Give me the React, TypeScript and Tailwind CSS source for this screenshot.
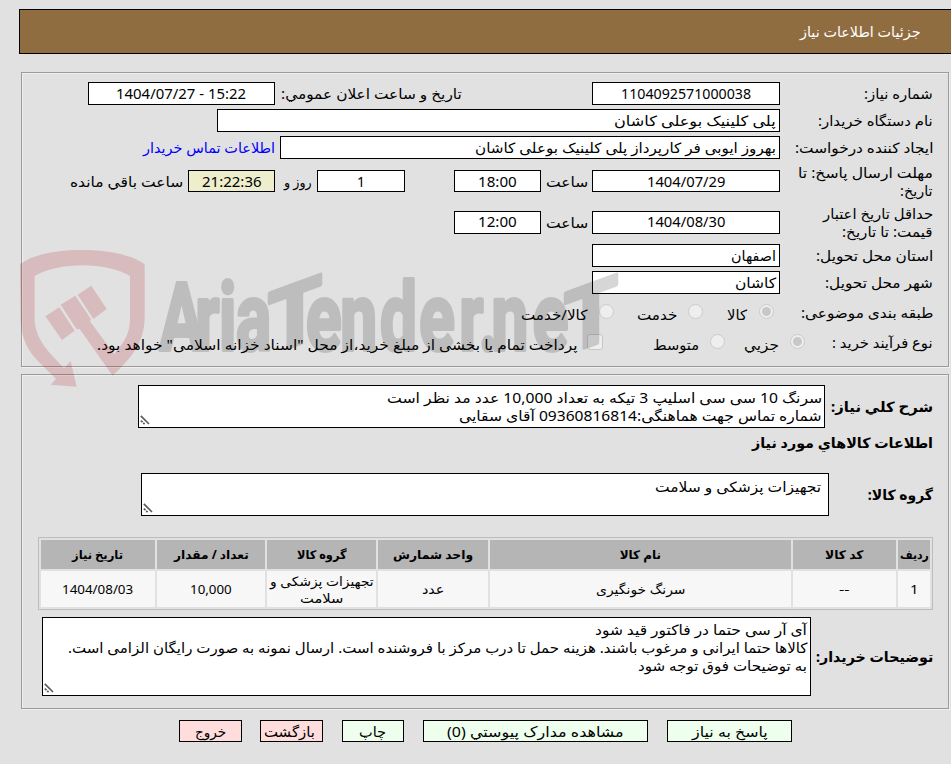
import { useLayoutEffect, useRef, useState, type ReactNode } from "react";

/** Single line of text set to an exact measure. */
function Fit({ w, className = "", children }: { w: number; className?: string; children: ReactNode }) {
  const ref = useRef<HTMLSpanElement>(null);
  const [scale, setScale] = useState(1);
  useLayoutEffect(() => {
    if (ref.current && ref.current.offsetWidth) setScale(w / ref.current.offsetWidth);
  }, [w]);
  return (
    <span className={`block shrink-0 ${className}`} style={{ width: w }}>
      <span ref={ref} className="block w-max origin-right whitespace-nowrap" style={{ transform: `scaleX(${scale})` }}>
        {children}
      </span>
    </span>
  );
}

function Box({ className = "", tone = "bg-white", children }: { className?: string; tone?: string; children: ReactNode }) {
  return (
    <div className={`flex shrink-0 items-center border border-black ${tone} ${className}`}>{children}</div>
  );
}

function Row({ className = "", label, children }: { className?: string; label: ReactNode; children: ReactNode }) {
  return (
    <div className={`flex items-center ${className}`}>
      <div className="w-[153px] shrink-0">{label}</div>
      {children}
    </div>
  );
}

function Radio({ checked = false, className = "" }: { checked?: boolean; className?: string }) {
  return (
    <span
      className={`flex size-[15px] shrink-0 items-center justify-center rounded-full border border-[#cbcbcb] bg-[#eeeeee] ${className}`}
    >
      {checked && <span className="size-[9px] rounded-full bg-[#c8c8c8]" />}
    </span>
  );
}

function Grip() {
  return (
    <svg className="absolute bottom-[2px] left-[1px]" width="10" height="10" viewBox="0 0 10 10" stroke="#5c5c5c" strokeWidth="1.7" fill="none">
      <path d="M0.8 0.8L9 9M0.8 5.6L2.6 7.2M3.2 7.8L4.6 9.2" />
    </svg>
  );
}

function Panel({ className, children }: { className: string; children: ReactNode }) {
  return (
    <section
      className={`mr-[2px] w-[928px] border border-[#9b9b9b] pr-[15px] shadow-[1px_1px_0_#efefef,inset_1px_1px_0_#efefef] ${className}`}
    >
      {children}
    </section>
  );
}

const columns = [
  { title: "ردیف", tw: 29, value: "1", vw: 8, width: "w-[32px]" },
  { title: "کد کالا", tw: 38, value: "--", vw: 10, width: "w-[103px]" },
  { title: "نام کالا", tw: 41, value: "سرنگ خونگیری", vw: 90, width: "w-[301px]" },
  { title: "واحد شمارش", tw: 80, value: "عدد", vw: 22, width: "w-[110px]" },
  { title: "گروه کالا", tw: 50, value: "", vw: 0, width: "w-[109px]" },
  { title: "تعداد / مقدار", tw: 75, value: "10,000", vw: 42, width: "w-[108px]" },
  { title: "تاریخ نیاز", tw: 51, value: "1404/08/03", vw: 71, width: "w-[114px]" },
];

const buttons = [
  { text: "پاسخ به نیاز", tw: 76, style: "mr-[159px] w-[125px] bg-[#eeffee]" },
  { text: "مشاهده مدارک پیوستي (0)", tw: 177, style: "mr-[19px] w-[225px] bg-[#eeffee]" },
  { text: "چاپ", tw: 27, style: "mr-[19px] w-[62px] bg-[#eeffee]" },
  { text: "بازگشت", tw: 51, style: "mr-[19px] w-[63px] bg-[#ffdddd] pr-[4px]" },
  { text: "خروج", tw: 31, style: "mr-[18px] w-[63px] bg-[#ffdddd]" },
];

function Watermark() {
  return (
    <svg className="pointer-events-none absolute left-0 top-0" width="951" height="764" viewBox="0 0 951 764">
      <g transform="translate(0 230) scale(.33333)" fill="#a8000a" fillOpacity=".17">
        <path d="M60 103C130 46 360 46 434 103V260C434 345 385 390 338 437L239 297L230 298L182 224L226 197L273 268L270 274L342 372C375 335 390 310 390 265V138C320 95 175 95 104 138V265C104 330 150 370 192 414L212 394L230 470L152 464L168 447C125 400 62 365 62 265Z" />
        <path d="M136 259L178 232L224 302L186 330ZM233 194L274 167L320 237L280 267Z" />
      </g>
      <g
        opacity=".17"
        fill="#141414"
        stroke="#141414"
        strokeWidth="4"
        strokeLinejoin="round"
        fontFamily="Roboto, 'Liberation Sans', sans-serif"
        fontWeight="700"
        fontSize="94"
        style={{ direction: "ltr" }}
      >
        <text transform="translate(0 350) scale(.7 1)" x="228 279 313 337">Aria</text>
        <text transform="translate(0 350) scale(.7 1)" x="437 486 543 599 656 684 702 761">ender.ne</text>
        <text transform="translate(268 355) skewY(-20)" fontSize="86" textLength="54" lengthAdjust="spacingAndGlyphs">T</text>
        <text transform="translate(564 355) skewY(-20)" fontSize="86" textLength="54" lengthAdjust="spacingAndGlyphs">T</text>
      </g>
    </svg>
  );
}

export default function App() {
  return (
    <div
      dir="rtl"
      className="relative h-[764px] w-[951px] overflow-hidden bg-[#e1e1e1] pt-[9px] font-['Noto_Sans','DejaVu_Sans',sans-serif] text-[14px] leading-[18px] text-black"
    >
      <header className="flex h-[45px] w-[932px] items-center border-y border-l border-black bg-[#8f6d40] pr-[30px] pt-px text-white">
        <Fit w={121}>جزئیات اطلاعات نیاز</Fit>
      </header>

      <Panel className="mt-[18px] h-[295px] pt-[9px]">
        <Row className="h-[23px]" label={<Fit w={69} className="pt-px">شماره نیاز:</Fit>}>
          <Box className="h-[23px] w-[188px] justify-center"><Fit w={130}>1104092571000038</Fit></Box>
          <Fit w={181} className="mr-[130px] pt-px">تاریخ و ساعت اعلان عمومي:</Fit>
          <Box className="mr-[6px] h-[23px] w-[187px] justify-center"><Fit w={130}><bdo dir="ltr">1404/07/27 - 15:22</bdo></Fit></Box>
        </Row>
        <Row className="mt-[4px] h-[23px]" label={<Fit w={115} className="pt-px">نام دستگاه خریدار:</Fit>}>
          <Box className="h-[23px] w-[563px] pr-[3px] pt-px"><Fit w={162}>پلی کلینیک بوعلی کاشان</Fit></Box>
        </Row>
        <Row className="mt-[4px] h-[23px]" label={<Fit w={138} className="pt-px">ایجاد کننده درخواست:</Fit>}>
          <Box className="h-[23px] w-[500px] pr-[3px] pt-px"><Fit w={301}>بهروز ایوبی فر کارپرداز پلی کلینیک بوعلی کاشان</Fit></Box>
          <Fit w={132} className="mr-[5px] pt-px text-[#0000ff]">اطلاعات تماس خریدار</Fit>
        </Row>
        <Row className="mt-[4px] h-[36px]" label={<div className="pt-[2px]"><Fit w={135}>مهلت ارسال پاسخ: تا</Fit><Fit w={33}>تاریخ:</Fit></div>}>
          <Box className="h-[22px] w-[188px] justify-center pt-px"><Fit w={78}>1404/07/29</Fit></Box>
          <Fit w={42} className="mr-[4px] pt-[2px]">ساعت</Fit>
          <Box className="mr-[5px] h-[22px] w-[87px] justify-center pt-px"><Fit w={39}>18:00</Fit></Box>
          <Box className="mr-[49px] h-[22px] w-[88px] justify-center pt-px"><Fit w={8}>1</Fit></Box>
          <Fit w={28} className="mr-[5px] pt-[2px]">روز و</Fit>
          <Box tone="bg-[#eeeecc]" className="mr-[9px] h-[22px] w-[87px] justify-center pt-px"><Fit w={60}>21:22:36</Fit></Box>
          <Fit w={113} className="mr-[5px] pt-[2px]">ساعت باقي مانده</Fit>
        </Row>
        <Row className="mt-[5px] h-[36px]" label={<div className="pt-[2px]"><Fit w={110}>حداقل تاریخ اعتبار</Fit><Fit w={91}>قیمت: تا تاریخ:</Fit></div>}>
          <Box className="h-[23px] w-[188px] justify-center"><Fit w={78}>1404/08/30</Fit></Box>
          <Fit w={42} className="mr-[4px] pt-[2px]">ساعت</Fit>
          <Box className="mr-[5px] h-[23px] w-[87px] justify-center"><Fit w={39}>12:00</Fit></Box>
        </Row>
        <Row className="mt-[4px] h-[23px]" label={<Fit w={117} className="pt-px">استان محل تحویل:</Fit>}>
          <Box className="h-[23px] w-[188px] pr-[3px] pt-px"><Fit w={45}>اصفهان</Fit></Box>
        </Row>
        <Row className="mt-[4px] h-[23px]" label={<Fit w={108} className="pt-px">شهر محل تحویل:</Fit>}>
          <Box className="h-[23px] w-[188px] pr-[3px] pt-px"><Fit w={41}>کاشان</Fit></Box>
        </Row>
        <Row className="mt-[8px] h-[22px]" label={<Fit w={132}>طبقه بندی موضوعی:</Fit>}>
          <Radio checked className="mb-[3px] mr-[6px]" />
          <Fit w={20} className="mr-[12px] pt-[3px]">کالا</Fit>
          <Radio className="mb-[3px] mr-[24px]" />
          <Fit w={40} className="mr-[11px] pt-[3px]">خدمت</Fit>
          <Radio className="mb-[3px] mr-[23px]" />
          <Fit w={66} className="mr-[12px] pt-[3px]">کالا/خدمت</Fit>
        </Row>
        <div className="mt-[8px] flex h-[22px] items-center">
          <Fit w={101}>نوع فرآیند خرید :</Fit>
          <Radio checked className="mb-[3px] mr-[27px]" />
          <Fit w={35} className="mr-[11px] pt-[3px]">جزیي</Fit>
          <Radio className="mb-[3px] mr-[19px]" />
          <Fit w={46} className="mr-[11px] pt-[3px]">متوسط</Fit>
          <span className="mb-[3px] mr-[50px] size-[16px] shrink-0 rounded-[3px] border border-[#c6c6c6] bg-[#eeeeee]" />
          <Fit w={481} className="mr-[9px] pt-[3px]">پرداخت تمام یا بخشی از مبلغ خرید،از محل "اسناد خزانه اسلامی" خواهد بود.</Fit>
        </div>
      </Panel>

      <Panel className="mt-[7px] h-[335px] pt-[10px]">
        <div className="flex items-center">
          <Fit w={102} className="font-bold">شرح کلي نیاز:</Fit>
          <div className="relative mr-[6px] h-[43px] w-[687px] border border-black bg-white pr-[2px] pt-[3px]">
            <Fit w={435}>سرنگ 10 سی سی اسلیپ 3 تیکه به تعداد 10,000 عدد مد نظر است</Fit>
            <Fit w={363}>شماره تماس جهت هماهنگی:09360816814 آقای سقایی</Fit>
            <Grip />
          </div>
        </div>
        <Fit w={181} className="mt-[6px] font-bold">اطلاعات کالاهاي مورد نیاز</Fit>
        <div className="mt-[21px] flex items-center">
          <Fit w={65} className="font-bold">گروه کالا:</Fit>
          <div className="relative mr-[39px] h-[43px] w-[688px] border border-black bg-white pr-[7px] pt-[4px]">
            <Fit w={166}>تجهیزات پزشکی و سلامت</Fit>
            <Grip />
          </div>
        </div>
        <div className="mt-[21px] h-[73px] w-[895px] border border-[#bcbcbc] p-[2px] text-[13px]">
          <div className="flex gap-[2px] text-[12px] font-bold">
            {columns.map((c) => (
              <div key={c.title} className={`flex h-[29px] shrink-0 items-center justify-center bg-[#b5b5b5] ${c.width}`}>
                <Fit w={c.tw}>{c.title}</Fit>
              </div>
            ))}
          </div>
          <div className="mt-[2px] flex gap-[2px]">
            {columns.map((c) => (
              <div key={c.title} className={`flex h-[36px] shrink-0 flex-col items-center justify-center bg-[#f7f7f7] pt-px leading-[17px] ${c.width}`}>
                {c.value ? (
                  <Fit w={c.vw}>{c.value}</Fit>
                ) : (
                  <>
                    <Fit w={104}>تجهیزات پزشکی و</Fit>
                    <Fit w={43}>سلامت</Fit>
                  </>
                )}
              </div>
            ))}
          </div>
        </div>
        <div className="mt-[7px] flex items-center">
          <Fit w={117} className="font-bold">توضیحات خریدار:</Fit>
          <div className="relative mr-[5px] h-[79px] w-[769px] border border-black bg-white pr-[3px] pt-[3px]">
            <Fit w={212}>آی آر سی حتما در فاکتور قید شود</Fit>
            <Fit w={739}>کالاها حتما ایرانی و مرغوب باشند. هزینه حمل تا درب مرکز با فروشنده است. ارسال نمونه به صورت رایگان الزامی است.</Fit>
            <Fit w={169}>به توضیحات فوق توجه شود</Fit>
            <Grip />
          </div>
        </div>
      </Panel>

      <div className="mt-[11px] flex">
        {buttons.map((b) => (
          <button key={b.text} className={`flex h-[22px] shrink-0 items-center justify-center border border-black pt-[2px] ${b.style}`}>
            <Fit w={b.tw}>{b.text}</Fit>
          </button>
        ))}
      </div>
      <Watermark />
    </div>
  );
}
